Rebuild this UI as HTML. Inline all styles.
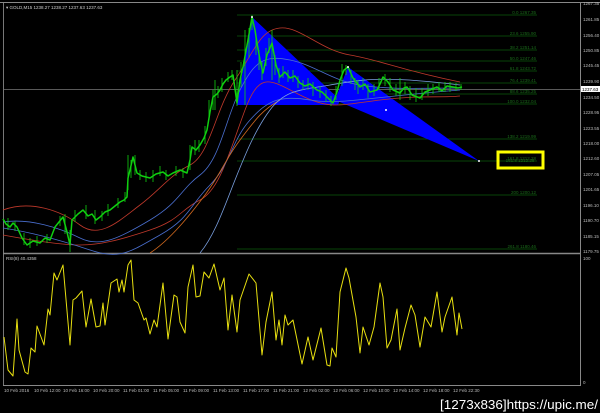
<!DOCTYPE html>
<html><head><meta charset="utf-8"><style>
html,body{margin:0;padding:0;background:#000;width:600px;height:413px;overflow:hidden}
svg{display:block}
text{font-family:"Liberation Sans",sans-serif}
</style></head><body>
<svg width="600" height="413" viewBox="0 0 600 413" xmlns="http://www.w3.org/2000/svg">
<rect width="600" height="413" fill="#000"/>
<line x1="0" y1="2.5" x2="600" y2="2.5" stroke="#888" stroke-width="1"/>
<line x1="3.5" y1="3" x2="3.5" y2="386" stroke="#777" stroke-width="1"/>
<line x1="580.5" y1="3" x2="580.5" y2="386" stroke="#888" stroke-width="1"/>
<line x1="3" y1="253.5" x2="580" y2="253.5" stroke="#888" stroke-width="1.5"/>
<line x1="3" y1="385.5" x2="580" y2="385.5" stroke="#888" stroke-width="1"/>
<g stroke="#0a5a0a" stroke-width="0.8">
<line x1="237" y1="15" x2="537" y2="15"/><line x1="237" y1="36" x2="537" y2="36"/>
<line x1="237" y1="50" x2="537" y2="50"/><line x1="237" y1="61" x2="537" y2="61"/>
<line x1="237" y1="71" x2="537" y2="71"/><line x1="237" y1="83" x2="537" y2="83"/>
<line x1="237" y1="94" x2="537" y2="94"/><line x1="237" y1="104" x2="537" y2="104"/>
<line x1="237" y1="139" x2="537" y2="139"/><line x1="237" y1="161" x2="537" y2="161"/>
<line x1="237" y1="195" x2="537" y2="195"/><line x1="237" y1="249" x2="537" y2="249"/>
</g>
<g fill="#1a6a1a" font-size="4.5" text-anchor="end">
<text x="536" y="14">0.0 1267.35</text><text x="536" y="35">23.6 1255.90</text>
<text x="536" y="49">38.2 1251.14</text><text x="536" y="60">50.0 1247.46</text>
<text x="536" y="70">61.8 1243.72</text><text x="536" y="82">76.4 1239.41</text>
<text x="536" y="93">88.6 1235.25</text><text x="536" y="103">100.0 1232.04</text>
<text x="536" y="138">138.2 1219.99</text><text x="536" y="160">161.8 1212.28</text>
<text x="536" y="194">200 1200.12</text><text x="536" y="248">261.8 1180.46</text>
</g>
<line x1="3" y1="89.5" x2="580" y2="89.5" stroke="#777" stroke-width="0.8"/>
<polygon points="237,105 252,17 340,100 338,105" fill="#0000ff"/>
<polygon points="335,100 348,67 479,161" fill="#0000ff"/>
<g fill="none" stroke-width="0.8">
<path d="M3,210 C30,200 60,210 80,225 S120,220 140,205 S170,175 190,165 S215,110 235,80 S260,30 280,28 S320,50 350,55 S400,70 460,82" stroke="#c0392b"/>
<path d="M3,235 C30,240 60,245 80,245 S120,240 150,230 S180,210 200,200 S230,150 245,110 S270,80 300,95 S340,105 380,100 S440,98 460,96" stroke="#c0392b"/>
<path d="M3,222 C30,218 60,228 80,238 S120,238 150,220 S180,190 200,175 S225,120 240,90 S265,55 290,60 S330,80 360,85 S420,88 460,88" stroke="#4a6fd0"/>
<path d="M3,228 C30,232 60,240 90,250 S130,252 160,235 S190,205 210,185 S232,140 250,120 S280,95 310,100 S360,98 460,90" stroke="#4a6fd0"/>
<path d="M150,253 C170,240 190,215 205,195 S225,160 240,140 S262,110 280,100" stroke="#d2691e"/>
<path d="M200,253 C215,235 225,205 235,180 S255,130 270,110 S300,90 330,85 S380,75 460,85" stroke="#7aa0e0"/>
</g>
<polyline fill="none" stroke="#10d010" stroke-width="1.5" stroke-linejoin="round" points="3,219 6,224 10,227 13,223 17,227 22,238 27,245 33,241 40,243 45,238 50,240 55,227 59,222 63,217 67,232 70,245 72,220 78,214 83,210 88,216 92,214 96,220 100,217 105,212 110,210 115,206 120,202 124,200 127,197 128,178 130,170 133,157 137,173 142,176 150,178 156,174 163,172 168,176 173,173 180,170 187,173 190,160 192,147 196,150 200,145 204,138 207,130 210,112 213,97 217,94 220,90 223,84 226,80 230,77 233,75 237,103 240,80 243,67 248,40 252,17 255,30 257,43 260,60 263,73 267,55 272,43 276,65 280,77 285,72 290,78 295,76 300,83 305,86 310,84 317,90 322,92 328,98 333,103 337,92 340,80 344,70 348,67 353,78 360,87 365,84 370,92 377,90 380,84 383,77 388,82 393,90 400,93 404,88 407,87 412,95 420,98 425,92 430,90 437,87 442,91 447,86 453,87 458,88 462,87"/>
<g stroke="#10d010" stroke-width="0.8">
<path d="M8,218v12M15,221v10M24,233v12M30,238v10M37,236v10M47,234v9M60,216v10M65,214v20M70,230v22M75,210v12M86,205v14M95,210v14M102,211v10M108,204v12M118,198v10M125,192v10M128,155v35M131,160v18M135,155v20M140,170v10M146,172v10M153,170v12M160,166v10M166,170v10M176,166v10M183,168v10M190,145v25M195,140v15M199,140v12M205,126v18M209,100v20M213,90v20M215,80v30M218,86v12M222,78v14M228,72v10M232,70v10M237,70v36M241,62v25M245,30v75M249,28v30M252,15v15M256,35v20M259,50v20M262,62v18M266,48v18M269,38v15M272,30v50M275,55v20M279,68v15M283,66v12M288,70v12M293,70v12M298,76v12M303,80v10M308,78v12M313,82v14M320,86v12M326,90v12M331,96v10M336,86v14M342,64v22M346,65v10M351,70v14M355,78v12M358,80v14M363,78v12M368,84v14M374,84v12M379,78v12M385,74v12M390,78v14M396,84v12M400,78v22M405,82v12M410,86v14M416,88v14M422,88v12M428,84v12M433,84v10M439,82v10M445,82v10M450,82v10M456,83v8M461,84v6"/>
</g>
<g fill="#fff"><circle cx="252" cy="17" r="1"/><circle cx="348" cy="67" r="1"/><circle cx="386" cy="110" r="1"/><circle cx="479" cy="161" r="1"/></g>
<rect x="498" y="152" width="45" height="16" fill="none" stroke="#ffff00" stroke-width="3"/>
<text x="520" y="162" fill="#1a6a1a" font-size="4.5" text-anchor="middle">161.8 1212.28</text>
<text x="6" y="9" fill="#ccc" font-size="4.5">▾ GOLD,M15  1238.27 1238.27 1237.63 1237.63</text>
<g fill="#bbb" font-size="4.5">
<text x="583" y="5">1267.35</text><text x="583" y="21">1261.85</text><text x="583" y="37">1256.40</text>
<text x="583" y="52">1250.85</text><text x="583" y="67">1245.45</text><text x="583" y="83">1239.90</text>
<text x="583" y="99">1234.50</text><text x="583" y="114">1228.95</text><text x="583" y="130">1223.55</text>
<text x="583" y="145">1218.00</text><text x="583" y="160">1212.60</text><text x="583" y="176">1207.05</text>
<text x="583" y="191">1201.65</text><text x="583" y="207">1196.10</text><text x="583" y="222">1190.70</text>
<text x="583" y="238">1185.15</text><text x="583" y="253">1179.75</text>
<text x="583" y="260">100</text><text x="583" y="384">0</text>
</g>
<rect x="581" y="86" width="19" height="6" fill="#fff"/>
<text x="582" y="91" fill="#000" font-size="4.5">1237.63</text>
<text x="6" y="260" fill="#ccc" font-size="4.5">RSI(8) 40.4358</text>
<polyline fill="none" stroke="#e8e010" stroke-width="1" stroke-linejoin="round" points="4,337 8,370 13,376 17,319 19,350 25,372 28,374 31,348 35,352 37,326 44,345 48,309 50,315 54,273 57,280 63,265 70,345 73,300 76,298 82,291 86,327 91,299 96,327 100,326 103,303 105,325 111,283 117,279 119,292 122,280 124,292 128,265 131,260 134,300 138,303 144,320 146,318 150,334 154,320 157,327 163,283 168,339 174,295 177,297 180,322 185,333 188,287 193,265 196,297 200,296 204,272 209,278 214,264 220,290 224,278 228,330 232,295 237,332 240,300 249,274 256,283 262,355 266,322 272,292 276,340 279,320 282,345 285,315 288,325 293,320 302,364 308,337 313,360 321,328 327,365 330,366 332,348 336,357 340,292 346,268 349,278 356,317 360,353 363,327 369,345 374,327 380,283 383,297 387,348 391,340 397,309 400,350 405,328 411,305 415,315 420,347 425,317 431,327 437,292 442,332 445,317 452,297 457,335 459,313 462,329"/>
<g fill="#bbb" font-size="4.5">
<text x="4" y="392">10 Feb 2016</text><text x="34" y="392">10 Feb 12:00</text><text x="63" y="392">10 Feb 16:00</text>
<text x="93" y="392">10 Feb 20:00</text><text x="123" y="392">11 Feb 01:00</text><text x="153" y="392">11 Feb 05:00</text>
<text x="183" y="392">11 Feb 09:00</text><text x="213" y="392">11 Feb 13:00</text><text x="243" y="392">11 Feb 17:00</text>
<text x="273" y="392">11 Feb 21:00</text><text x="303" y="392">12 Feb 02:00</text><text x="333" y="392">12 Feb 06:00</text>
<text x="363" y="392">12 Feb 10:00</text><text x="393" y="392">12 Feb 14:00</text><text x="423" y="392">12 Feb 18:00</text>
<text x="453" y="392">12 Feb 22:30</text>
</g>
<text x="598" y="409" fill="#fff" font-size="13" text-anchor="end" font-family="Liberation Mono, monospace" textLength="158" lengthAdjust="spacingAndGlyphs">[1273x836]https://upic.me/</text>
</svg>
</body></html>
